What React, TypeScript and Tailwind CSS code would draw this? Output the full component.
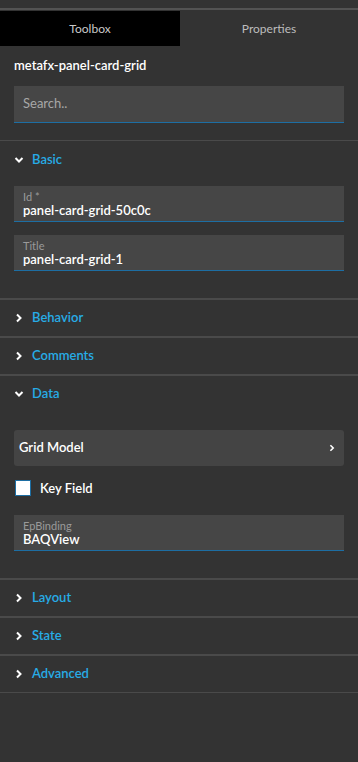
import React from "react";

function ChevronDown() {
  return (
    <svg width="10" height="8" viewBox="0 0 10 8" className="shrink-0">
      <path d="M1.5 2 L5 5.5 L8.5 2" fill="none" stroke="#fff" strokeWidth="2" />
    </svg>
  );
}

function ChevronRight({ size = 10 }: { size?: number }) {
  return (
    <svg width={size} height={size} viewBox="0 0 10 10" className="shrink-0">
      <path d="M3 1.5 L6.5 5 L3 8.5" fill="none" stroke="#fff" strokeWidth="2" />
    </svg>
  );
}

function SectionHeader({ title, open, tall }: { title: string; open?: boolean; tall?: boolean }) {
  return (
    <div className={`flex items-center gap-[8px] pl-[14px] ${tall ? "h-[37px]" : "h-[36px]"}`}>
      {open ? <ChevronDown /> : <ChevronRight />}
      <span className="text-[13px] font-semibold text-[#27ace6]">{title}</span>
    </div>
  );
}

function Field({ label, value }: { label: string; value: string }) {
  return (
    <div className="flex h-[36px] flex-col justify-center border-b border-[#1d6ea3] bg-[#464646] px-[9px] pt-[1px]">
      <span className="text-[11px] leading-[13px] text-[#9a9a9a]">{label}</span>
      <span className="text-[13px] leading-[15px] font-semibold text-white">{value}</span>
    </div>
  );
}

const collapsed = ["Behavior", "Comments"];
const collapsedBottom = ["Layout", "State", "Advanced"];

export default function App() {
  return (
    <div className="min-h-screen w-[358px] bg-[#333333] font-['Lato',sans-serif]">
      <div className="h-[8px]" />
      <div className="h-[2px] bg-[#535353]" />
      <div className="h-[1px]" />
      <div className="flex h-[35px] text-[12px]">
        <div className="flex w-[180px] items-center justify-center bg-black text-[#c9c9c9]">Toolbox</div>
        <div className="flex flex-1 items-center justify-center text-[#bdbdbd]">Properties</div>
      </div>

      <div className="flex h-[40px] items-center px-[14px] text-[13px] font-semibold text-white">
        metafx-panel-card-grid
      </div>
      <div className="px-[14px]">
        <div className="flex h-[37px] items-center border-b border-[#1d6ea3] bg-[#464646] px-[9px] text-[13px] text-[#a8a8a8]">
          Search..
        </div>
      </div>
      <div className="h-[17px]" />
      <div className="h-px bg-[#4a4a4a]" />

      <SectionHeader title="Basic" open tall />
      <div className="flex flex-col gap-[13px] px-[14px] pt-[8px] pb-[27px]">
        <Field label="Id *" value="panel-card-grid-50c0c" />
        <Field label="Title" value="panel-card-grid-1" />
      </div>

      {collapsed.map((t) => (
        <div key={t} className="border-t-2 border-[#4a4a4a]">
          <SectionHeader title={t} />
        </div>
      ))}

      <div className="border-t-2 border-[#4a4a4a]">
        <SectionHeader title="Data" open />
        <div className="flex flex-col px-[14px] pt-[18px] pb-[27px]">
          <div className="flex h-[36px] items-center justify-between rounded-[3px] bg-[#444444] pr-[8px] pl-[5px]">
            <span className="text-[13px] font-semibold text-white">Grid Model</span>
            <ChevronRight size={8} />
          </div>
          <div className="flex h-[49px] items-start gap-[9px] pt-[14px] pl-[1px]">
            <div className="h-[16px] w-[16px] border border-[#1d6ea3] bg-white" />
            <span className="text-[13px] leading-[16px] font-semibold text-white">Key Field</span>
          </div>
          <Field label="EpBinding" value="BAQView" />
        </div>
      </div>

      {collapsedBottom.map((t) => (
        <div key={t} className="border-t-2 border-[#4a4a4a]">
          <SectionHeader title={t} />
        </div>
      ))}
      <div className="h-px bg-[#4a4a4a]" />
    </div>
  );
}
